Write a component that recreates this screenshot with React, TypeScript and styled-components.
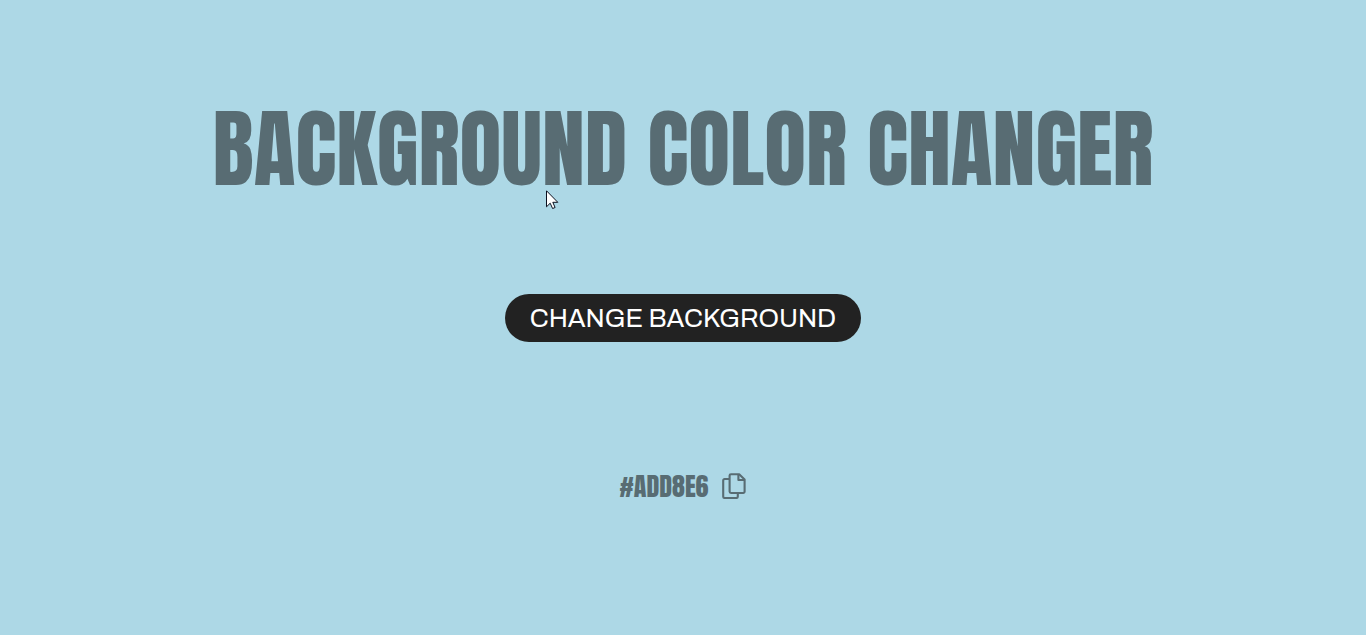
import React, { useState } from 'react';
import styled, { createGlobalStyle } from 'styled-components';

const ink = '#586c73';

const GlobalStyle = createGlobalStyle<{ $color: string }>`
  * { box-sizing: border-box; margin: 0; padding: 0; }
  body { background: ${p => p.$color}; }
`;

const Page = styled.main`
  min-height: 100vh;
  display: flex;
  flex-direction: column;
  align-items: center;
  padding: 84px 16px 32px;
  font-family: Anton, Impact, sans-serif;
  color: ${ink};
`;

const Title = styled.h1`
  font-size: 86px;
  font-weight: 400;
  line-height: 130px;
  text-align: center;
`;

const ChangeButton = styled.button`
  height: 48px;
  margin-top: 80px;
  padding: 0 25px;
  border: 0;
  border-radius: 24px;
  background: #222;
  color: #fff;
  font-family: Archivo, "Liberation Sans", Arial, sans-serif;
  font-size: 26px;
  line-height: 32px;
  cursor: pointer;
`;

const ColorRow = styled.div`
  display: flex;
  align-items: center;
  gap: 14px;
  margin-top: 124px;
`;

const ColorCode = styled.p`
  font-size: 26px;
  line-height: 40px;
`;

const CopyButton = styled.button`
  display: flex;
  border: 0;
  background: none;
  color: inherit;
  cursor: pointer;
`;

const Pointer = styled.svg`
  position: absolute;
  left: 546px;
  top: 190px;
  pointer-events: none;
`;

const palette = ['#ADD8E6', '#F5C6AA', '#B8E0C2', '#D7C4EC', '#F3E3A3'];

export default function App() {
  const [index, setIndex] = useState(0);
  const color = palette[index];
  return (
    <Page>
      <GlobalStyle $color={color} />
      <Title>BACKGROUND COLOR CHANGER</Title>
      <ChangeButton type="button" onClick={() => setIndex((index + 1) % palette.length)}>
        CHANGE BACKGROUND
      </ChangeButton>
      <ColorRow>
        <ColorCode>{color}</ColorCode>
        <CopyButton type="button" aria-label="Copy color" onClick={() => navigator.clipboard?.writeText(color)}>
          <svg width="24" height="26" viewBox="0 0 24 26" fill="none" stroke="currentColor" strokeWidth="2.1" strokeLinejoin="round">
            <path d="M7.6 6H2.6a1.4 1.4 0 0 0-1.4 1.4v16.2A1.4 1.4 0 0 0 2.600 25h11.800a1.400 1.400 0 0 0 1.400-1.400V20" />
            <path d="M9 1.200h8.200l5.400 5.200v12.200a1.400 1.400 0 0 1-1.400 1.400H9a1.400 1.400 0 0 1-1.400-1.400V2.600A1.400 1.400 0 0 1 9 1.200z" />
            <path d="M16.400 1.600v5.400h5.800" />
          </svg>
        </CopyButton>
      </ColorRow>
      <Pointer width="13" height="20" viewBox="0 0 13 20" aria-hidden="true">
        <path d="M.5.8v16l3.7-3.600 2.400 5.300 2.500-1-2.300-5.200h5z" fill="#fff" stroke="#0a0f1e" />
      </Pointer>
    </Page>
  );
}
